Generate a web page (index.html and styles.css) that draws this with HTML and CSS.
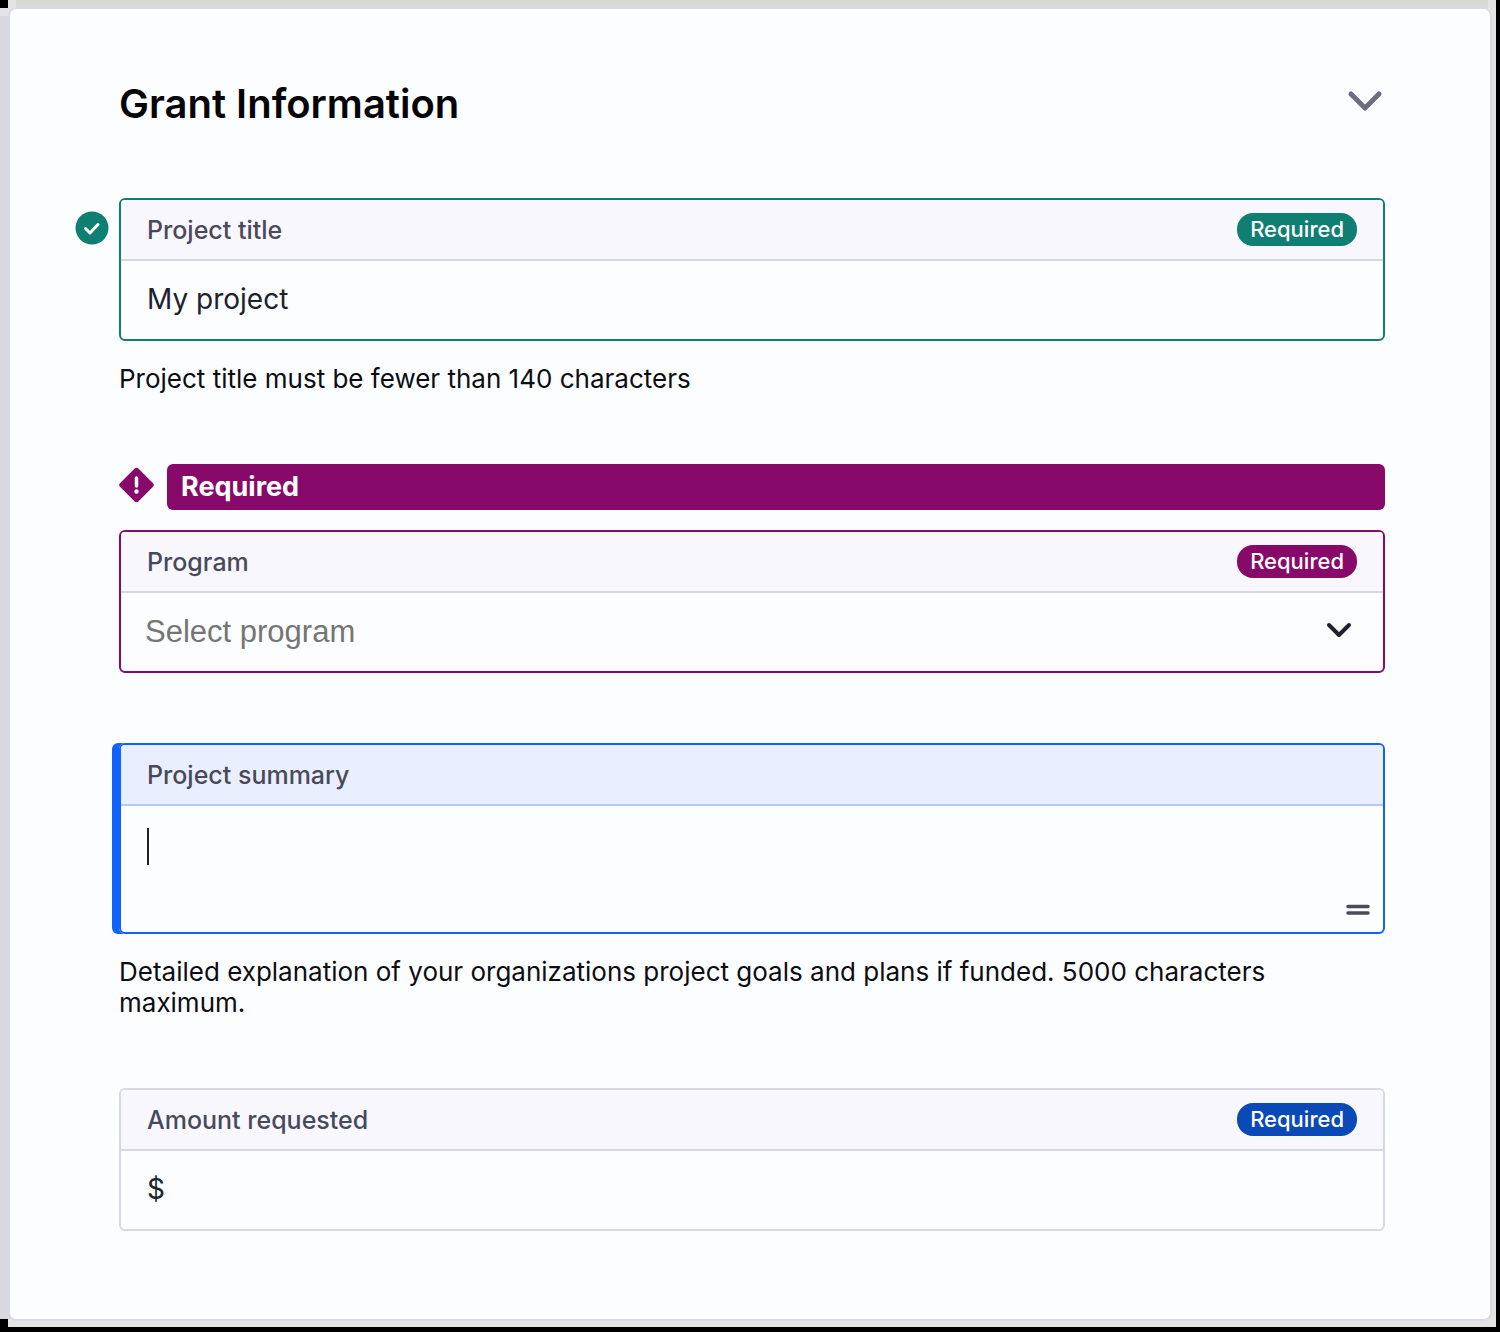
FILE: index.html
```html
<!DOCTYPE html>
<html lang="en">
<head>
<meta charset="utf-8">
<meta name="viewport" content="width=device-width, initial-scale=1">
<title>Grant Information</title>
<link rel="stylesheet" href="styles.css">
</head>
<body>
<main class="stage">
  <form class="card">
    <header class="card-header">
      <h1 class="card-title">Grant Information</h1>
      <button class="collapse" type="button" aria-label="Collapse section">
        <svg width="36" height="24" viewBox="0 0 36 24" fill="none" stroke="currentColor" stroke-width="5" stroke-linecap="round" stroke-linejoin="round"><path d="M4 5l14 14L32 5"/></svg>
      </button>
    </header>

    <div class="fields">
      <div class="group">
        <svg class="status" width="34" height="34" viewBox="0 0 34 34" aria-hidden="true"><circle cx="17" cy="17" r="16.500" fill="#0f7f73"/><path d="M10.500 17.500l4.500 4.500 8-8.500" fill="none" stroke="#fff" stroke-width="3" stroke-linecap="round" stroke-linejoin="round"/></svg>
        <div class="field field-valid">
          <div class="field-head">
            <label for="title">Project title</label>
            <span class="badge">Required</span>
          </div>
          <div class="field-body"><input class="control" id="title" type="text" value="My project" aria-describedby="title-help"></div>
        </div>
        <p class="help" id="title-help">Project title must be fewer than 140 characters</p>
      </div>

      <div class="group">
        <div class="alert">
          <svg width="35" height="36" viewBox="0 0 35 36" aria-hidden="true"><rect x="4.500" y="5" width="26" height="26" rx="3" transform="rotate(45 17.500 18)" fill="#870a6b"/><path d="M17.500 11v8" stroke="#fff" stroke-width="3.500" stroke-linecap="round"/><circle cx="17.500" cy="24.500" r="2.200" fill="#fff"/></svg>
          <p class="alert-text" id="program-error">Required</p>
        </div>
        <div class="field field-error">
          <div class="field-head">
            <label for="program">Program</label>
            <span class="badge">Required</span>
          </div>
          <div class="field-body select-wrap">
            <select class="control select" id="program" aria-describedby="program-error"><option>Select program</option></select>
            <svg class="select-arrow" width="28" height="18" viewBox="0 0 28 18" fill="none" stroke="#20222b" stroke-width="4" stroke-linecap="round" stroke-linejoin="round" aria-hidden="true"><path d="M4 4l10 10L24 4"/></svg>
          </div>
        </div>
      </div>

      <div class="group">
        <div class="field field-focus">
          <div class="field-head">
            <label for="summary">Project summary</label>
          </div>
          <div class="field-body area-wrap">
            <textarea class="control area" id="summary" aria-describedby="summary-help"></textarea>
            <span class="caret"></span>
            <svg class="grip" width="24" height="12" viewBox="0 0 24 12" stroke="#4b4959" stroke-width="3.500" stroke-linecap="round" aria-hidden="true"><path d="M2 2.500h20M2 9h20"/></svg>
          </div>
        </div>
        <p class="help" id="summary-help">Detailed explanation of your organizations project goals and plans if funded. 5000 characters maximum.</p>
      </div>

      <div class="group">
        <div class="field">
          <div class="field-head">
            <label for="amount">Amount requested</label>
            <span class="badge">Required</span>
          </div>
          <div class="field-body"><label class="prefix" for="amount">$</label><input class="control" id="amount" type="text" inputmode="decimal"></div>
        </div>
      </div>
    </div>
  </form>
</main>
</body>
</html>
```
FILE: styles.css
```css
* { box-sizing: border-box; }

body {
  margin: 0;
  background: #000;
  font-family: Inter, "Liberation Sans", sans-serif;
  color: #0c0d12;
}

h1, p { margin: 0; }

/* Grey surround with notched corners on a black backdrop */
.stage {
  margin: 0 4px 4px 0;
  padding: 8px 4px 6px 8px;
  background:
    linear-gradient(#000, #000) left top / 8px 8px no-repeat,
    linear-gradient(#000, #000) left bottom / 8px 8px no-repeat,
    linear-gradient(#e4e4e4, #e4e4e4) left top / 16px 16px no-repeat,
    linear-gradient(#e4e4e4, #e4e4e4) right top / 8px 100% no-repeat,
    linear-gradient(#e4e4e4, #e4e4e4) left bottom / 100% 8px no-repeat,
    linear-gradient(#d8dad2, #d8dad2) left top / 100% 4px no-repeat,
    #d9d8de;
}

.card {
  padding: 69px 105px 88px 109px;
  border: 2px solid #d9d9e8;
  border-top-width: 1px;
  border-radius: 8px;
  background: #fcfdff;
}

.card-header {
  display: flex;
  align-items: center;
  justify-content: space-between;
  margin-bottom: 68px;
}

.card-title {
  font-size: 40px;
  line-height: 52px;
  font-weight: 600;
  color: #050507;
}

.collapse {
  display: flex;
  padding: 0 2px 6px;
  border: 0;
  background: none;
  color: #6b6e80;
}

.fields {
  display: flex;
  flex-direction: column;
  gap: 70px;
}

.group { position: relative; }

.status {
  position: absolute;
  left: -44px;
  top: 13px;
}

.field {
  --accent: #d7d7e2;
  --badge: #0a49b6;
  --head: #f8f7fd;
  --rule: #d7d7e0;
  border: 2px solid var(--accent);
  border-radius: 6px;
}

.field-valid { --accent: #0f7f73; --badge: #0f7f73; }
.field-error { --accent: #870a6b; --badge: #870a6b; }

.field-focus {
  --accent: #0f62fe;
  --head: #eaefff;
  --rule: #b0c8fa;
  box-shadow: -7px 0 0 var(--accent);
}

.field-head {
  display: flex;
  align-items: center;
  justify-content: space-between;
  height: 61px;
  padding: 0 26px;
  border-bottom: 2px solid var(--rule);
  border-radius: 4px 4px 0 0;
  background: var(--head);
  color: #484a5b;
  font-size: 25px;
  line-height: 30px;
  font-weight: 500;
}

.badge {
  padding: 0 13px;
  border-radius: 16px;
  background: var(--badge);
  color: #fff;
  font-size: 22px;
  line-height: 33px;
  font-weight: 500;
}

.field-body {
  display: flex;
  align-items: center;
  min-height: 78px;
  padding: 0 26px 2px;
  font-size: 28px;
  color: #20222b;
}

.control {
  flex: 1;
  min-width: 0;
  height: 40px;
  padding: 0;
  border: 0;
  outline: 0;
  background: transparent;
  color: inherit;
  font: inherit;
}

.select-wrap, .area-wrap { position: relative; }

.select {
  appearance: none;
  color: #757575;
  font-family: "Liberation Sans", Arial, sans-serif;
  font-size: 31px;
}

.select-wrap { padding-left: 24px; }

.select-arrow {
  position: absolute;
  right: 30px;
  top: 28px;
  pointer-events: none;
}

.area-wrap { padding-top: 20px; padding-bottom: 20px; }

.area {
  height: 86px;
  resize: none;
}

.caret {
  position: absolute;
  left: 26px;
  top: 22px;
  width: 2px;
  height: 37px;
  background: #20222b;
}

.grip {
  position: absolute;
  right: 13px;
  bottom: 16px;
}

.help {
  margin-top: 22px;
  font-size: 26px;
  line-height: 31px;
}

.alert {
  display: flex;
  align-items: center;
  gap: 13px;
  margin-bottom: 20px;
}

.alert svg { margin-bottom: 4px; flex: none; }

.alert-text {
  flex: 1;
  padding: 0 14px;
  border-radius: 6px;
  background: #870a6b;
  color: #fff;
  font-size: 27px;
  line-height: 46px;
  font-weight: 700;
}
```
